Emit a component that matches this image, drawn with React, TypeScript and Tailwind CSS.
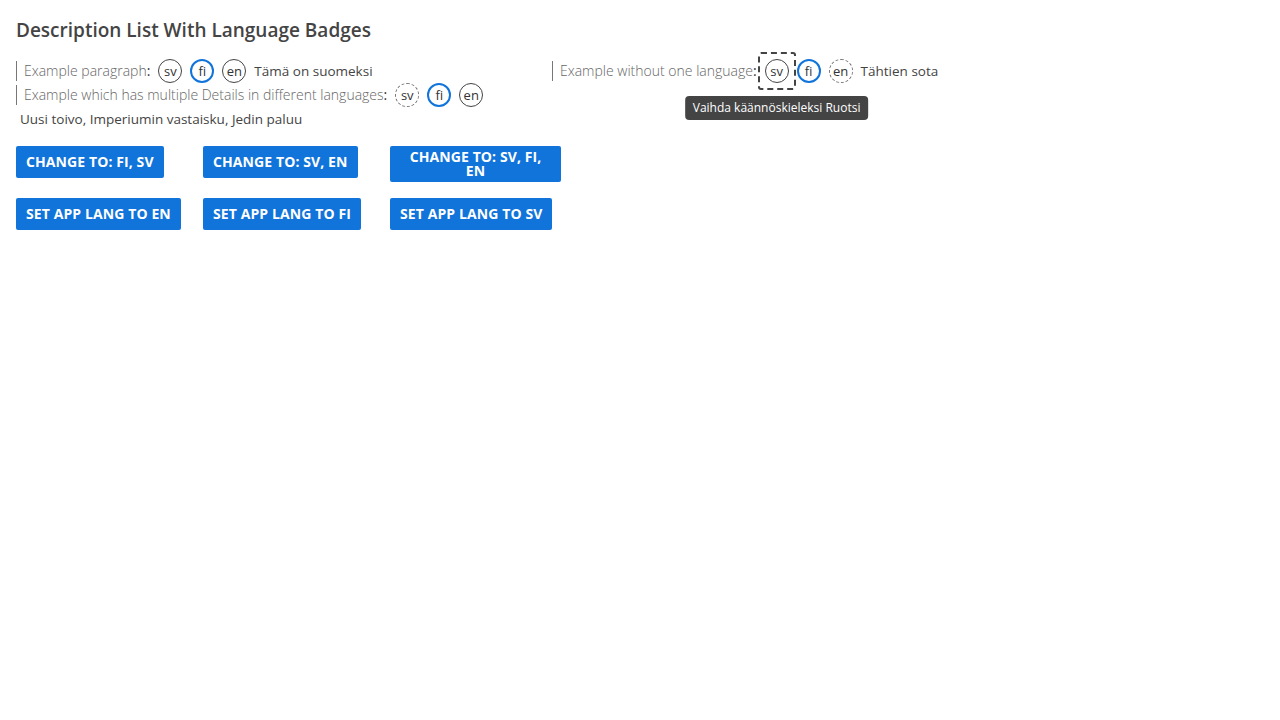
import type { ReactNode } from 'react';

type Lang = 'sv' | 'fi' | 'en';

interface BadgeProps {
  lang: Lang;
  selected?: boolean;
  missing?: boolean;
  focused?: boolean;
  tooltip?: string;
}

function LangBadge({ lang, selected, missing, focused, tooltip }: BadgeProps) {
  const ring = selected
    ? 'border-2 border-[#1174da]'
    : missing
      ? 'border border-dashed border-[#777]'
      : 'border border-[#444]';
  return (
    <span className="relative inline-flex">
      <span
        className={`w-6 h-6 rounded-full flex items-center justify-center text-[13px] leading-none text-[#333] ${ring}`}
      >
        {lang}
      </span>
      {focused && (
        <span className="absolute -inset-[7px] border-2 border-dashed border-[#444] rounded-[3px]" />
      )}
      {tooltip && (
        <span className="absolute left-1/2 -translate-x-1/2 top-[37px] whitespace-nowrap h-6 px-2 rounded bg-[#444] text-white text-xs leading-6 z-10">
          {tooltip}
        </span>
      )}
    </span>
  );
}

function Item({ label, badges, children }: { label: string; badges: ReactNode; children: ReactNode }) {
  return (
    <div className="flex flex-wrap items-center min-h-6">
      <dt className="border-l border-[#777] pl-[7px] leading-5 font-light text-[#666] text-sm">
        {label}
        <span className="text-[#333] font-normal">:</span>
      </dt>
      <div className="ml-2 mr-1 flex gap-2">{badges}</div>
      <dd className="ml-1 text-[13.5px] text-[#444] leading-6">{children}</dd>
    </div>
  );
}

const buttonRows = [
  ['Change to: fi, sv', 'Change to: sv, en', 'Change to: sv, fi, en'],
  ['Set app lang to en', 'Set app lang to fi', 'Set app lang to sv'],
];

export default function App() {
  return (
    <div className="min-h-screen bg-white p-4 font-['Open_Sans',sans-serif]">
      <h2 className="text-[19px] font-semibold leading-7 text-[#444]">Description List With Language Badges</h2>

      <div className="mt-[15px] grid grid-cols-[536px_536px]">
        <dl>
          <Item
            label="Example paragraph"
            badges={
              <>
                <LangBadge lang="sv" />
                <LangBadge lang="fi" selected />
                <LangBadge lang="en" />
              </>
            }
          >
            Tämä on suomeksi
          </Item>
          <Item
            label="Example which has multiple Details in different languages"
            badges={
              <>
                <LangBadge lang="sv" missing />
                <LangBadge lang="fi" selected />
                <LangBadge lang="en" />
              </>
            }
          >
            Uusi toivo, Imperiumin vastaisku, Jedin paluu
          </Item>
        </dl>
        <dl>
          <Item
            label="Example without one language"
            badges={
              <>
                <LangBadge lang="sv" focused tooltip="Vaihda käännöskieleksi Ruotsi" />
                <LangBadge lang="fi" selected />
                <LangBadge lang="en" missing />
              </>
            }
          >
            Tähtien sota
          </Item>
        </dl>
      </div>

      <div className="mt-[15px] grid grid-cols-[171px_171px_171px] gap-x-4 gap-y-4 items-start">
        {buttonRows.flat().map((label) => (
          <button
            key={label}
            className="justify-self-start min-h-8 px-2.5 py-1 rounded-[2px] bg-[#1174da] text-white text-sm font-bold uppercase tracking-[0.1px] leading-[14px] text-center"
          >
            {label}
          </button>
        ))}
      </div>
    </div>
  );
}
